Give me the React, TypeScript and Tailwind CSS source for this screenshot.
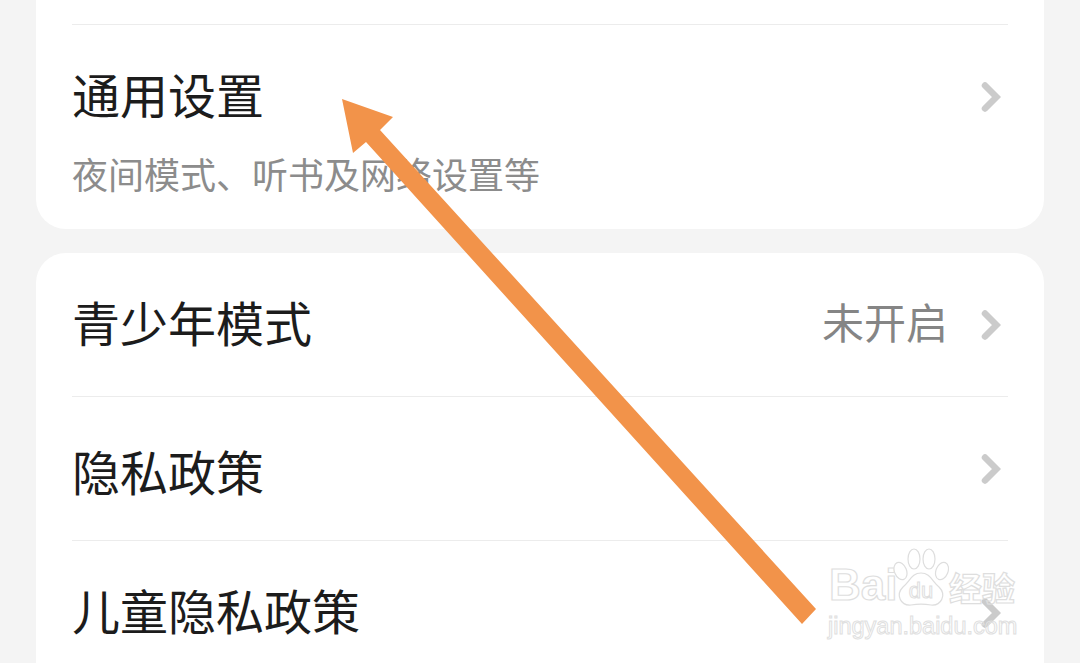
import { ReactNode } from 'react';

const CJK = 'font-["Noto_Sans_CJK_SC","Noto_Sans_CJK_JP",sans-serif]';

function Chevron() {
  return (
    <svg width="20" height="30" viewBox="0 0 20 30" fill="none" className="mr-[7px] shrink-0">
      <path d="M4 3.5 L15.5 15 L4 26.5" stroke="#cbcbcb" strokeWidth="6.5" strokeLinecap="round" strokeLinejoin="miter" />
    </svg>
  );
}

function Row({ title, value, className, textClass = 'pb-[8px]' }: { title: string; value?: string; className: string; textClass?: string }) {
  return (
    <div className={`flex items-center justify-between ${className}`}>
      <span className={`text-[48px] leading-[60px] text-[#1c1c1c] ${textClass}`}>{title}</span>
      <div className="flex items-center gap-[33px]">
        {value && <span className={`text-[42px] leading-[52px] text-[#858585] ${textClass}`}>{value}</span>}
        <Chevron />
      </div>
    </div>
  );
}

function Card({ children, className }: { children: ReactNode; className: string }) {
  return <div className={`bg-white px-[36px] ${className}`}>{children}</div>;
}

function Paw() {
  return (
    <div className="grid h-[60px] w-[56px] shrink-0 place-items-center">
      <svg width="56" height="60" viewBox="0 0 56 60" fill="#ffffff" stroke="#dedede" strokeWidth="1.2" className="[grid-area:1/1]">
        <ellipse cx="7.5" cy="23" rx="6" ry="9" transform="rotate(-22 7.5 23)" />
        <ellipse cx="21" cy="11" rx="6" ry="10" />
        <ellipse cx="36" cy="11" rx="6" ry="10" />
        <ellipse cx="49" cy="23" rx="6" ry="9" transform="rotate(22 49 23)" />
        <path d="M28 25 C37 25 39 33 46 39 C54 47 48 58 38 57 C32 56 24 56 18 57 C8 58 2 47 10 39 C17 33 19 25 28 25 Z" />
      </svg>
      <span className="pt-[26px] font-['Liberation_Sans',sans-serif] text-[22px] leading-[24px] text-transparent [-webkit-text-stroke:1px_#dedede] [grid-area:1/1]">du</span>
    </div>
  );
}

function Watermark() {
  return (
    <div className="absolute left-[828px] top-[548px] flex w-[196px] flex-col">
      <div className="flex h-[60px] items-end whitespace-nowrap">
        <span className="w-[65px] shrink-0 pl-[1px] font-['Liberation_Sans',sans-serif] text-[44px] font-bold leading-[46px] text-transparent [-webkit-text-stroke:1.2px_#dedede]">Bai</span>
        <Paw />
        <span className="pb-[2px] text-[33px] font-bold leading-[38px] text-transparent [-webkit-text-stroke:1.2px_#dedede]">经验</span>
      </div>
      <span className="pt-[4px] font-['Liberation_Sans',sans-serif] text-[23.5px] leading-[28px] whitespace-nowrap text-transparent [-webkit-text-stroke:1px_#e0e0e0]">jingyan.baidu.com</span>
    </div>
  );
}

function Arrow() {
  return (
    <svg width="1080" height="663" viewBox="0 0 1080 663" className="pointer-events-none absolute inset-0">
      <polygon points="342,99 393,117 380,130 816,609 802,624 366,142 353,153" fill="#f2934a" />
    </svg>
  );
}

export default function App() {
  return (
    <div className={`relative h-[663px] w-[1080px] overflow-hidden bg-[#f4f4f4] px-[36px] ${CJK}`}>
      <Card className="h-[229px] rounded-b-[30px]">
        <div className="h-[25px] border-b border-[#ececec]" />
        <Row title="通用设置" className="mt-[22px] h-[100px]" />
        <p className="mt-[4px] text-[36px] leading-[44px] text-[#8c8c8c]">夜间模式、听书及网络设置等</p>
      </Card>
      <Card className="mt-[24px] h-[460px] rounded-t-[30px]">
        <Row title="青少年模式" value="未开启" className="h-[144px] border-b border-[#ececec]" />
        <Row title="隐私政策" className="h-[144px] border-b border-[#ececec]" textClass="pt-[2px]" />
        <Row title="儿童隐私政策" className="h-[144px]" />
      </Card>
      <Watermark />
      <Arrow />
    </div>
  );
}
